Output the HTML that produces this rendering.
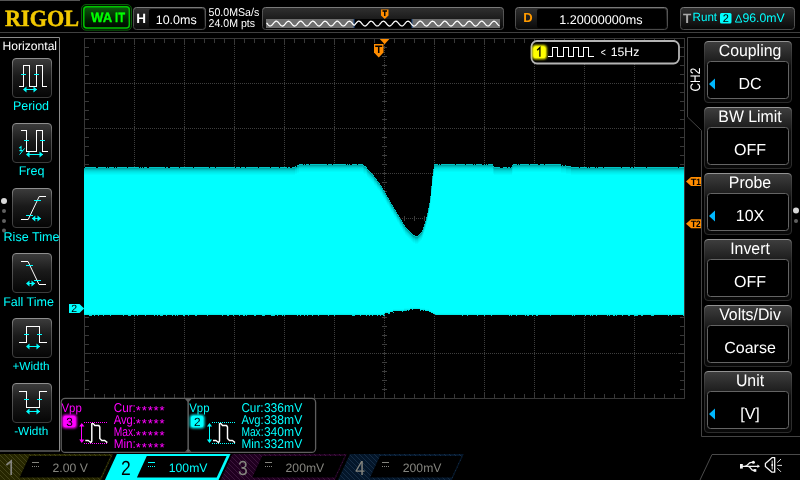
<!DOCTYPE html>
<html><head><meta charset="utf-8"><title>RIGOL</title><style>html,body{margin:0;padding:0;background:#000;overflow:hidden}body{width:800px;height:480px;font-family:"Liberation Sans",sans-serif}svg{display:block;position:absolute;left:0;top:0;will-change:transform}</style></head><body><svg width="800" height="480" viewBox="0 0 800 480" font-family="Liberation Sans, sans-serif" text-rendering="geometricPrecision"><defs>
<linearGradient id="gBtn" x1="0" y1="0" x2="0" y2="1"><stop offset="0" stop-color="#3c3c3c"/><stop offset="0.45" stop-color="#1a1a1a"/><stop offset="1" stop-color="#050505"/></linearGradient>
<linearGradient id="gMenu" x1="0" y1="0" x2="0" y2="1"><stop offset="0" stop-color="#3e3e3e"/><stop offset="0.32" stop-color="#1e1e1e"/><stop offset="0.4" stop-color="#0e0e0e"/><stop offset="1" stop-color="#080808"/></linearGradient>
<linearGradient id="gBtnS" x1="0" y1="0" x2="0" y2="1"><stop offset="0" stop-color="#8e8e8e"/><stop offset="0.25" stop-color="#5a5a5a"/><stop offset="1" stop-color="#3c3c3c"/></linearGradient>
<linearGradient id="gMenuS" x1="0" y1="0" x2="0" y2="1"><stop offset="0" stop-color="#929292"/><stop offset="0.06" stop-color="#4a4a4a"/><stop offset="0.3" stop-color="#303030"/><stop offset="1" stop-color="#2c2c2c"/></linearGradient>
<linearGradient id="gBoxS" x1="0" y1="0" x2="0" y2="1"><stop offset="0" stop-color="#7a7a7a"/><stop offset="0.2" stop-color="#565656"/><stop offset="1" stop-color="#4a4a4a"/></linearGradient>
<linearGradient id="gTop" x1="0" y1="0" x2="0" y2="1"><stop offset="0" stop-color="#303030"/><stop offset="1" stop-color="#080808"/></linearGradient>
<linearGradient id="gWait" x1="0" y1="0" x2="0" y2="1"><stop offset="0" stop-color="#0c5a0c"/><stop offset="0.6" stop-color="#022002"/><stop offset="1" stop-color="#000800"/></linearGradient>
<pattern id="h1" width="5" height="5" patternUnits="userSpaceOnUse"><rect width="5" height="5" fill="#262600"/><path d="M-1,-1 L6,6 M-1,4 L1,6 M4,-1 L6,1" stroke="#46461c" stroke-width="0.9"/></pattern>
<pattern id="h3" width="5" height="5" patternUnits="userSpaceOnUse"><rect width="5" height="5" fill="#200020"/><path d="M-1,-1 L6,6 M-1,4 L1,6 M4,-1 L6,1" stroke="#401840" stroke-width="0.9"/></pattern>
<pattern id="h4" width="5" height="5" patternUnits="userSpaceOnUse"><rect width="5" height="5" fill="#04162a"/><path d="M-1,-1 L6,6 M-1,4 L1,6 M4,-1 L6,1" stroke="#183048" stroke-width="0.9"/></pattern>
<filter id="glow" x="-30%" y="-30%" width="160%" height="160%"><feGaussianBlur stdDeviation="0.9"/></filter>
</defs>
<rect x="0" y="0" width="800" height="480" fill="#000"/>
<rect x="0" y="32" width="800" height="1" fill="#404040"/>
<rect x="0" y="0" width="80" height="1" fill="#555"/>
<text x="5" y="25.6" font-family="Liberation Serif, serif" font-weight="bold" font-size="23.2" fill="#f2c800" stroke="#f2c800" stroke-width="0.5" textLength="74" lengthAdjust="spacingAndGlyphs">RIGOL</text>
<rect x="81.5" y="4.5" width="50" height="25.7" rx="4.5" fill="#001400" stroke="#0a5c0a" stroke-width="1"/>
<rect x="83.8" y="6.8" width="45.5" height="21.3" rx="3" fill="url(#gWait)" stroke="#00c400" stroke-width="1.5"/>
<text x="91" y="21.8" font-family="Liberation Sans, sans-serif" font-weight="bold" font-size="13.5" fill="#00ff00" stroke="#00ff00" stroke-width="0.35" textLength="21.2" lengthAdjust="spacingAndGlyphs">WA</text>
<text x="115" y="21.8" font-family="Liberation Sans, sans-serif" font-weight="bold" font-size="13.5" fill="#00ff00" stroke="#00ff00" stroke-width="0.35" textLength="10" lengthAdjust="spacingAndGlyphs">IT</text>
<rect x="133.5" y="7.5" width="72" height="22" rx="3" fill="url(#gTop)" stroke="url(#gBoxS)"/>
<rect x="149" y="9" width="55" height="19" rx="2" fill="#000"/>
<text x="136.3" y="22.7" font-size="13.5" fill="#fff" text-anchor="start" font-weight="bold" >H</text>
<text x="155.7" y="23.6" font-size="12.5" fill="#fff" text-anchor="start" font-weight="normal" >10.0ms</text>
<text x="208.6" y="16" font-size="11.3" fill="#fff" text-anchor="start" font-weight="normal" textLength="50.6" lengthAdjust="spacingAndGlyphs">50.0MSa/s</text>
<text x="208.6" y="26.9" font-size="11.3" fill="#fff" text-anchor="start" font-weight="normal" textLength="46.4" lengthAdjust="spacingAndGlyphs">24.0M pts</text>
<rect x="262.5" y="7.5" width="241" height="22" rx="3" fill="url(#gTop)" stroke="url(#gBoxS)"/>
<rect x="266" y="19" width="234" height="9" fill="#6e6e6e"/>
<rect x="354" y="19" width="58" height="9" fill="#000"/>
<rect x="353.5" y="19" width="1" height="9" fill="#1a4a8a"/>
<rect x="411.5" y="19" width="1" height="9" fill="#1a4a8a"/>
<polyline points="266.5,22.80 267.0,23.41 267.5,24.02 268.0,24.61 268.5,25.13 269.0,25.55 269.5,25.84 270.0,25.99 270.5,25.97 271.0,25.80 271.5,25.48 272.0,25.04 272.5,24.51 273.0,23.91 273.5,23.29 274.0,22.70 274.5,22.16 275.0,21.72 275.5,21.40 276.0,21.23 276.5,21.21 277.0,21.35 277.5,21.64 278.0,22.06 278.5,22.58 279.0,23.17 279.5,23.79 280.0,24.39 280.5,24.94 281.0,25.41 281.5,25.75 282.0,25.95 282.5,26.00 283.0,25.88 283.5,25.62 284.0,25.22 284.5,24.72 285.0,24.14 285.5,23.53 286.0,22.92 286.5,22.36 287.0,21.87 287.5,21.51 288.0,21.28 288.5,21.20 289.0,21.28 289.5,21.52 290.0,21.89 290.5,22.38 291.0,22.94 291.5,23.55 292.0,24.17 292.5,24.74 293.0,25.24 293.5,25.63 294.0,25.89 294.5,26.00 295.0,25.95 295.5,25.74 296.0,25.39 296.5,24.92 297.0,24.37 297.5,23.76 298.0,23.15 298.5,22.56 299.0,22.04 299.5,21.63 300.0,21.35 300.5,21.21 301.0,21.23 301.5,21.41 302.0,21.73 302.5,22.18 303.0,22.72 303.5,23.32 304.0,23.94 304.5,24.53 305.0,25.06 305.5,25.50 306.0,25.81 306.5,25.98 307.0,25.98 307.5,25.83 308.0,25.54 308.5,25.11 309.0,24.59 309.5,24.00 310.0,23.38 310.5,22.78 311.0,22.23 311.5,21.77 312.0,21.44 312.5,21.24 313.0,21.21 313.5,21.33 314.0,21.60 314.5,22.00 315.0,22.51 315.5,23.09 316.0,23.70 316.5,24.31 317.0,24.87 317.5,25.35 318.0,25.71 318.5,25.93 319.0,26.00 319.5,25.91 320.0,25.67 320.5,25.29 321.0,24.80 321.5,24.23 322.0,23.62 322.5,23.00 323.0,22.43 323.5,21.93 324.0,21.55 324.5,21.30 325.0,21.20 325.5,21.26 326.0,21.48 326.5,21.83 327.0,22.30 327.5,22.86 328.0,23.47 328.5,24.08 329.0,24.67 329.5,25.18 330.0,25.59 330.5,25.86 331.0,25.99 331.5,25.96 332.0,25.78 332.5,25.45 333.0,24.99 333.5,24.45 334.0,23.85 334.5,23.23 335.0,22.64 335.5,22.11 336.0,21.68 336.5,21.38 337.0,21.22 337.5,21.22 338.0,21.38 338.5,21.68 339.0,22.11 339.5,22.64 340.0,23.23 340.5,23.85 341.0,24.45 341.5,24.99 342.0,25.45 342.5,25.78 343.0,25.96 343.5,25.99 344.0,25.86 344.5,25.59 345.0,25.18 345.5,24.67 346.0,24.08 346.5,23.47 347.0,22.86 347.5,22.30 348.0,21.83 348.5,21.48 349.0,21.26 349.5,21.20 350.0,21.30 350.5,21.55 351.0,21.93 351.5,22.43 352.0,23.00 352.5,23.62 353.0,24.23 353.5,24.80 354.0,25.29" fill="none" stroke="#fff" stroke-width="1.25"/>
<polyline points="354.0,25.47 354.5,25.03 355.0,24.50 355.5,23.90 356.0,23.29 356.5,22.70 357.0,22.17 357.5,21.73 358.0,21.41 358.5,21.23 359.0,21.21 359.5,21.34 360.0,21.62 360.5,22.03 361.0,22.54 361.5,23.12 362.0,23.73 362.5,24.33 363.0,24.89 363.5,25.36 364.0,25.71 364.5,25.93 365.0,26.00 365.5,25.91 366.0,25.67 366.5,25.30 367.0,24.81 367.5,24.25 368.0,23.65 368.5,23.04 369.0,22.47 369.5,21.97 370.0,21.58 370.5,21.32 371.0,21.20 371.5,21.25 372.0,21.44 372.5,21.78 373.0,22.24 373.5,22.78 374.0,23.38 374.5,23.99 375.0,24.57 375.5,25.10 376.0,25.52 376.5,25.82 377.0,25.98 377.5,25.98 378.0,25.83 378.5,25.53 379.0,25.11 379.5,24.59 380.0,24.00 380.5,23.39 381.0,22.79 381.5,22.25 382.0,21.79 382.5,21.45 383.0,21.25 383.5,21.20 384.0,21.31 384.5,21.57 385.0,21.96 385.5,22.46 386.0,23.03 386.5,23.63 387.0,24.24 387.5,24.80 388.0,25.29 388.5,25.67 389.0,25.91 389.5,26.00 390.0,25.94 390.5,25.72 391.0,25.37 391.5,24.90 392.0,24.35 392.5,23.74 393.0,23.13 393.5,22.55 394.0,22.04 394.5,21.63 395.0,21.35 395.5,21.21 396.0,21.23 396.5,21.40 397.0,21.72 397.5,22.16 398.0,22.69 398.5,23.28 399.0,23.89 399.5,24.48 400.0,25.02 400.5,25.46 401.0,25.78 401.5,25.96 402.0,25.99 402.5,25.86 403.0,25.59 403.5,25.18 404.0,24.67 404.5,24.10 405.0,23.49 405.5,22.88 406.0,22.33 406.5,21.85 407.0,21.49 407.5,21.27 408.0,21.20 408.5,21.28 409.0,21.52 409.5,21.89 410.0,22.37 410.5,22.93 411.0,23.54 411.5,24.14 412.0,24.72 412.5,25.22 413.0,25.61 413.5,25.88 414.0,26.00 414.5,25.96 415.0,25.76 415.5,25.43 416.0,24.98 416.5,24.44 417.0,23.84 417.5,23.23 418.0,22.64 418.5,22.12 419.0,21.69 419.5,21.38 420.0,21.22 420.5,21.22 421.0,21.37 421.5,21.66 422.0,22.08 422.5,22.60 423.0,23.18 423.5,23.79 424.0,24.39 424.5,24.94 425.0,25.40 425.5,25.74 426.0,25.95 426.5,26.00 427.0,25.89 427.5,25.64 428.0,25.25 428.5,24.76 429.0,24.19 429.5,23.58 430.0,22.98 430.5,22.41 431.0,21.92 431.5,21.54 432.0,21.30 432.5,21.20 433.0,21.26 433.5,21.47 434.0,21.82 434.5,22.29 435.0,22.84 435.5,23.44 436.0,24.05 436.5,24.63 437.0,25.14 437.5,25.56 438.0,25.85 438.5,25.99 439.0,25.97 439.5,25.80 440.0,25.49 440.5,25.06 441.0,24.53 441.5,23.94 442.0,23.33 442.5,22.73 443.0,22.20 443.5,21.75 444.0,21.42 444.5,21.24 445.0,21.21 445.5,21.33 446.0,21.60 446.5,22.00 447.0,22.51 447.5,23.09 448.0,23.70 448.5,24.30 449.0,24.86 449.5,25.33 450.0,25.70 450.5,25.92 451.0,26.00 451.5,25.92 452.0,25.69 452.5,25.32 453.0,24.85 453.5,24.29 454.0,23.68 454.5,23.07 455.0,22.50 455.5,22.00 456.0,21.60 456.5,21.33 457.0,21.21 457.5,21.24 458.0,21.43 458.5,21.76 459.0,22.21 459.5,22.74 460.0,23.34 460.5,23.95 461.0,24.54 461.5,25.07 462.0,25.50 462.5,25.81 463.0,25.97 463.5,25.99 464.0,25.84 464.5,25.55 465.0,25.14 465.5,24.62 466.0,24.04 466.5,23.43 467.0,22.83 467.5,22.28 468.0,21.81 468.5,21.47 469.0,21.26 469.5,21.20 470.0,21.30 470.5,21.55 471.0,21.93 471.5,22.42 472.0,22.99 472.5,23.60 473.0,24.20 473.5,24.77 474.0,25.26 474.5,25.65 475.0,25.90 475.5,26.00 476.0,25.94 476.5,25.74 477.0,25.39 477.5,24.93 478.0,24.38 478.5,23.78 479.0,23.17 479.5,22.59 480.0,22.07 480.5,21.65 481.0,21.36 481.5,21.22 482.0,21.22 482.5,21.39 483.0,21.70 483.5,22.13 484.0,22.65 484.5,23.24 485.0,23.85 485.5,24.45 486.0,24.99 486.5,25.44 487.0,25.77 487.5,25.96 488.0,25.99 488.5,25.87 489.0,25.61 489.5,25.21 490.0,24.71 490.5,24.13 491.0,23.52 491.5,22.92 492.0,22.36 492.5,21.88 493.0,21.51 493.5,21.28 494.0,21.20 494.5,21.27 495.0,21.50 495.5,21.86 496.0,22.34 496.5,22.90 497.0,23.50 497.5,24.11 498.0,24.68 498.5,25.19 499.0,25.59 499.5,25.87" fill="none" stroke="#fff" stroke-width="1.25"/>
<path d="M381,9.5 h7.5 v6 l-3.75,3.5 l-3.75,-3.5 z" fill="#ff8c00"/>
<path d="M382.5,11 h4.5 M384.75,11 v5" stroke="#000" stroke-width="1.4" fill="none"/>
<rect x="515.5" y="7.5" width="152" height="22" rx="3" fill="url(#gTop)" stroke="url(#gBoxS)"/>
<rect x="537" y="9" width="129" height="19" rx="2" fill="#000"/>
<text x="523.2" y="22.4" font-size="13" fill="#ff9a00" text-anchor="start" font-weight="bold" >D</text>
<text x="559.3" y="23.6" font-size="12.6" fill="#fff" text-anchor="start" font-weight="normal" >1.20000000ms</text>
<rect x="680.5" y="7.5" width="114" height="22" rx="3" fill="url(#gTop)" stroke="url(#gBoxS)"/>
<text x="683" y="22.5" font-size="13.5" fill="#a8a8a8" text-anchor="start" font-weight="bold" >T</text>
<text x="692.5" y="21.4" font-size="12" fill="#00ffff" text-anchor="start" font-weight="normal" textLength="24.6" lengthAdjust="spacingAndGlyphs">Runt</text>
<rect x="720" y="13" width="11.5" height="10.5" rx="1.5" fill="#00ffff"/>
<text x="725.8" y="22.3" font-size="11" fill="#000" text-anchor="middle" font-weight="normal" >2</text>
<path d="M735.4,22.1 L738.6,14.8 L741.8,22.1 Z" fill="none" stroke="#00ffff" stroke-width="1"/>
<text x="742.4" y="21.5" font-size="12.4" fill="#00ffff" text-anchor="start" font-weight="normal" textLength="42.4" lengthAdjust="spacingAndGlyphs">96.0mV</text>
<g shape-rendering="crispEdges"><line x1="134.5" y1="40" x2="134.5" y2="398" stroke="#3e3e3e" stroke-dasharray="1 1"/><line x1="184.5" y1="40" x2="184.5" y2="398" stroke="#3e3e3e" stroke-dasharray="1 1"/><line x1="234.5" y1="40" x2="234.5" y2="398" stroke="#3e3e3e" stroke-dasharray="1 1"/><line x1="284.5" y1="40" x2="284.5" y2="398" stroke="#3e3e3e" stroke-dasharray="1 1"/><line x1="334.5" y1="40" x2="334.5" y2="398" stroke="#3e3e3e" stroke-dasharray="1 1"/><line x1="384.5" y1="40" x2="384.5" y2="398" stroke="#3e3e3e" stroke-dasharray="1 1"/><line x1="434.5" y1="40" x2="434.5" y2="398" stroke="#3e3e3e" stroke-dasharray="1 1"/><line x1="484.5" y1="40" x2="484.5" y2="398" stroke="#3e3e3e" stroke-dasharray="1 1"/><line x1="534.5" y1="40" x2="534.5" y2="398" stroke="#3e3e3e" stroke-dasharray="1 1"/><line x1="584.5" y1="40" x2="584.5" y2="398" stroke="#3e3e3e" stroke-dasharray="1 1"/><line x1="634.5" y1="40" x2="634.5" y2="398" stroke="#3e3e3e" stroke-dasharray="1 1"/><line x1="86" y1="83.5" x2="684" y2="83.5" stroke="#3e3e3e" stroke-dasharray="1 1"/><rect x="134" y="82" width="1" height="3" fill="#3e3e3e"/><rect x="184" y="82" width="1" height="3" fill="#3e3e3e"/><rect x="234" y="82" width="1" height="3" fill="#3e3e3e"/><rect x="284" y="82" width="1" height="3" fill="#3e3e3e"/><rect x="334" y="82" width="1" height="3" fill="#3e3e3e"/><rect x="384" y="82" width="1" height="3" fill="#3e3e3e"/><rect x="434" y="82" width="1" height="3" fill="#3e3e3e"/><rect x="484" y="82" width="1" height="3" fill="#3e3e3e"/><rect x="534" y="82" width="1" height="3" fill="#3e3e3e"/><rect x="584" y="82" width="1" height="3" fill="#3e3e3e"/><rect x="634" y="82" width="1" height="3" fill="#3e3e3e"/><line x1="86" y1="128.5" x2="684" y2="128.5" stroke="#3e3e3e" stroke-dasharray="1 1"/><rect x="134" y="127" width="1" height="3" fill="#3e3e3e"/><rect x="184" y="127" width="1" height="3" fill="#3e3e3e"/><rect x="234" y="127" width="1" height="3" fill="#3e3e3e"/><rect x="284" y="127" width="1" height="3" fill="#3e3e3e"/><rect x="334" y="127" width="1" height="3" fill="#3e3e3e"/><rect x="384" y="127" width="1" height="3" fill="#3e3e3e"/><rect x="434" y="127" width="1" height="3" fill="#3e3e3e"/><rect x="484" y="127" width="1" height="3" fill="#3e3e3e"/><rect x="534" y="127" width="1" height="3" fill="#3e3e3e"/><rect x="584" y="127" width="1" height="3" fill="#3e3e3e"/><rect x="634" y="127" width="1" height="3" fill="#3e3e3e"/><line x1="86" y1="173.5" x2="684" y2="173.5" stroke="#3e3e3e" stroke-dasharray="1 1"/><rect x="134" y="172" width="1" height="3" fill="#3e3e3e"/><rect x="184" y="172" width="1" height="3" fill="#3e3e3e"/><rect x="234" y="172" width="1" height="3" fill="#3e3e3e"/><rect x="284" y="172" width="1" height="3" fill="#3e3e3e"/><rect x="334" y="172" width="1" height="3" fill="#3e3e3e"/><rect x="384" y="172" width="1" height="3" fill="#3e3e3e"/><rect x="434" y="172" width="1" height="3" fill="#3e3e3e"/><rect x="484" y="172" width="1" height="3" fill="#3e3e3e"/><rect x="534" y="172" width="1" height="3" fill="#3e3e3e"/><rect x="584" y="172" width="1" height="3" fill="#3e3e3e"/><rect x="634" y="172" width="1" height="3" fill="#3e3e3e"/><line x1="86" y1="218.5" x2="684" y2="218.5" stroke="#3e3e3e" stroke-dasharray="1 1"/><rect x="134" y="217" width="1" height="3" fill="#3e3e3e"/><rect x="184" y="217" width="1" height="3" fill="#3e3e3e"/><rect x="234" y="217" width="1" height="3" fill="#3e3e3e"/><rect x="284" y="217" width="1" height="3" fill="#3e3e3e"/><rect x="334" y="217" width="1" height="3" fill="#3e3e3e"/><rect x="384" y="217" width="1" height="3" fill="#3e3e3e"/><rect x="434" y="217" width="1" height="3" fill="#3e3e3e"/><rect x="484" y="217" width="1" height="3" fill="#3e3e3e"/><rect x="534" y="217" width="1" height="3" fill="#3e3e3e"/><rect x="584" y="217" width="1" height="3" fill="#3e3e3e"/><rect x="634" y="217" width="1" height="3" fill="#3e3e3e"/><line x1="86" y1="263.5" x2="684" y2="263.5" stroke="#3e3e3e" stroke-dasharray="1 1"/><rect x="134" y="262" width="1" height="3" fill="#3e3e3e"/><rect x="184" y="262" width="1" height="3" fill="#3e3e3e"/><rect x="234" y="262" width="1" height="3" fill="#3e3e3e"/><rect x="284" y="262" width="1" height="3" fill="#3e3e3e"/><rect x="334" y="262" width="1" height="3" fill="#3e3e3e"/><rect x="384" y="262" width="1" height="3" fill="#3e3e3e"/><rect x="434" y="262" width="1" height="3" fill="#3e3e3e"/><rect x="484" y="262" width="1" height="3" fill="#3e3e3e"/><rect x="534" y="262" width="1" height="3" fill="#3e3e3e"/><rect x="584" y="262" width="1" height="3" fill="#3e3e3e"/><rect x="634" y="262" width="1" height="3" fill="#3e3e3e"/><line x1="86" y1="308.5" x2="684" y2="308.5" stroke="#3e3e3e" stroke-dasharray="1 1"/><rect x="134" y="307" width="1" height="3" fill="#3e3e3e"/><rect x="184" y="307" width="1" height="3" fill="#3e3e3e"/><rect x="234" y="307" width="1" height="3" fill="#3e3e3e"/><rect x="284" y="307" width="1" height="3" fill="#3e3e3e"/><rect x="334" y="307" width="1" height="3" fill="#3e3e3e"/><rect x="384" y="307" width="1" height="3" fill="#3e3e3e"/><rect x="434" y="307" width="1" height="3" fill="#3e3e3e"/><rect x="484" y="307" width="1" height="3" fill="#3e3e3e"/><rect x="534" y="307" width="1" height="3" fill="#3e3e3e"/><rect x="584" y="307" width="1" height="3" fill="#3e3e3e"/><rect x="634" y="307" width="1" height="3" fill="#3e3e3e"/><line x1="86" y1="353.5" x2="684" y2="353.5" stroke="#3e3e3e" stroke-dasharray="1 1"/><rect x="134" y="352" width="1" height="3" fill="#3e3e3e"/><rect x="184" y="352" width="1" height="3" fill="#3e3e3e"/><rect x="234" y="352" width="1" height="3" fill="#3e3e3e"/><rect x="284" y="352" width="1" height="3" fill="#3e3e3e"/><rect x="334" y="352" width="1" height="3" fill="#3e3e3e"/><rect x="384" y="352" width="1" height="3" fill="#3e3e3e"/><rect x="434" y="352" width="1" height="3" fill="#3e3e3e"/><rect x="484" y="352" width="1" height="3" fill="#3e3e3e"/><rect x="534" y="352" width="1" height="3" fill="#3e3e3e"/><rect x="584" y="352" width="1" height="3" fill="#3e3e3e"/><rect x="634" y="352" width="1" height="3" fill="#3e3e3e"/><rect x="94" y="39" width="1" height="4" fill="#383838"/><rect x="94" y="394" width="1" height="4" fill="#383838"/><rect x="94" y="216" width="1" height="5" fill="#3e3e3e"/><rect x="104" y="39" width="1" height="4" fill="#383838"/><rect x="104" y="394" width="1" height="4" fill="#383838"/><rect x="104" y="216" width="1" height="5" fill="#3e3e3e"/><rect x="114" y="39" width="1" height="4" fill="#383838"/><rect x="114" y="394" width="1" height="4" fill="#383838"/><rect x="114" y="216" width="1" height="5" fill="#3e3e3e"/><rect x="124" y="39" width="1" height="4" fill="#383838"/><rect x="124" y="394" width="1" height="4" fill="#383838"/><rect x="124" y="216" width="1" height="5" fill="#3e3e3e"/><rect x="134" y="39" width="1" height="6" fill="#383838"/><rect x="134" y="392" width="1" height="6" fill="#383838"/><rect x="134" y="216" width="1" height="5" fill="#3e3e3e"/><rect x="144" y="39" width="1" height="4" fill="#383838"/><rect x="144" y="394" width="1" height="4" fill="#383838"/><rect x="144" y="216" width="1" height="5" fill="#3e3e3e"/><rect x="154" y="39" width="1" height="4" fill="#383838"/><rect x="154" y="394" width="1" height="4" fill="#383838"/><rect x="154" y="216" width="1" height="5" fill="#3e3e3e"/><rect x="164" y="39" width="1" height="4" fill="#383838"/><rect x="164" y="394" width="1" height="4" fill="#383838"/><rect x="164" y="216" width="1" height="5" fill="#3e3e3e"/><rect x="174" y="39" width="1" height="4" fill="#383838"/><rect x="174" y="394" width="1" height="4" fill="#383838"/><rect x="174" y="216" width="1" height="5" fill="#3e3e3e"/><rect x="184" y="39" width="1" height="6" fill="#383838"/><rect x="184" y="392" width="1" height="6" fill="#383838"/><rect x="184" y="216" width="1" height="5" fill="#3e3e3e"/><rect x="194" y="39" width="1" height="4" fill="#383838"/><rect x="194" y="394" width="1" height="4" fill="#383838"/><rect x="194" y="216" width="1" height="5" fill="#3e3e3e"/><rect x="204" y="39" width="1" height="4" fill="#383838"/><rect x="204" y="394" width="1" height="4" fill="#383838"/><rect x="204" y="216" width="1" height="5" fill="#3e3e3e"/><rect x="214" y="39" width="1" height="4" fill="#383838"/><rect x="214" y="394" width="1" height="4" fill="#383838"/><rect x="214" y="216" width="1" height="5" fill="#3e3e3e"/><rect x="224" y="39" width="1" height="4" fill="#383838"/><rect x="224" y="394" width="1" height="4" fill="#383838"/><rect x="224" y="216" width="1" height="5" fill="#3e3e3e"/><rect x="234" y="39" width="1" height="6" fill="#383838"/><rect x="234" y="392" width="1" height="6" fill="#383838"/><rect x="234" y="216" width="1" height="5" fill="#3e3e3e"/><rect x="244" y="39" width="1" height="4" fill="#383838"/><rect x="244" y="394" width="1" height="4" fill="#383838"/><rect x="244" y="216" width="1" height="5" fill="#3e3e3e"/><rect x="254" y="39" width="1" height="4" fill="#383838"/><rect x="254" y="394" width="1" height="4" fill="#383838"/><rect x="254" y="216" width="1" height="5" fill="#3e3e3e"/><rect x="264" y="39" width="1" height="4" fill="#383838"/><rect x="264" y="394" width="1" height="4" fill="#383838"/><rect x="264" y="216" width="1" height="5" fill="#3e3e3e"/><rect x="274" y="39" width="1" height="4" fill="#383838"/><rect x="274" y="394" width="1" height="4" fill="#383838"/><rect x="274" y="216" width="1" height="5" fill="#3e3e3e"/><rect x="284" y="39" width="1" height="6" fill="#383838"/><rect x="284" y="392" width="1" height="6" fill="#383838"/><rect x="284" y="216" width="1" height="5" fill="#3e3e3e"/><rect x="294" y="39" width="1" height="4" fill="#383838"/><rect x="294" y="394" width="1" height="4" fill="#383838"/><rect x="294" y="216" width="1" height="5" fill="#3e3e3e"/><rect x="304" y="39" width="1" height="4" fill="#383838"/><rect x="304" y="394" width="1" height="4" fill="#383838"/><rect x="304" y="216" width="1" height="5" fill="#3e3e3e"/><rect x="314" y="39" width="1" height="4" fill="#383838"/><rect x="314" y="394" width="1" height="4" fill="#383838"/><rect x="314" y="216" width="1" height="5" fill="#3e3e3e"/><rect x="324" y="39" width="1" height="4" fill="#383838"/><rect x="324" y="394" width="1" height="4" fill="#383838"/><rect x="324" y="216" width="1" height="5" fill="#3e3e3e"/><rect x="334" y="39" width="1" height="6" fill="#383838"/><rect x="334" y="392" width="1" height="6" fill="#383838"/><rect x="334" y="216" width="1" height="5" fill="#3e3e3e"/><rect x="344" y="39" width="1" height="4" fill="#383838"/><rect x="344" y="394" width="1" height="4" fill="#383838"/><rect x="344" y="216" width="1" height="5" fill="#3e3e3e"/><rect x="354" y="39" width="1" height="4" fill="#383838"/><rect x="354" y="394" width="1" height="4" fill="#383838"/><rect x="354" y="216" width="1" height="5" fill="#3e3e3e"/><rect x="364" y="39" width="1" height="4" fill="#383838"/><rect x="364" y="394" width="1" height="4" fill="#383838"/><rect x="364" y="216" width="1" height="5" fill="#3e3e3e"/><rect x="374" y="39" width="1" height="4" fill="#383838"/><rect x="374" y="394" width="1" height="4" fill="#383838"/><rect x="374" y="216" width="1" height="5" fill="#3e3e3e"/><rect x="384" y="39" width="1" height="6" fill="#383838"/><rect x="384" y="392" width="1" height="6" fill="#383838"/><rect x="384" y="216" width="1" height="5" fill="#3e3e3e"/><rect x="394" y="39" width="1" height="4" fill="#383838"/><rect x="394" y="394" width="1" height="4" fill="#383838"/><rect x="394" y="216" width="1" height="5" fill="#3e3e3e"/><rect x="404" y="39" width="1" height="4" fill="#383838"/><rect x="404" y="394" width="1" height="4" fill="#383838"/><rect x="404" y="216" width="1" height="5" fill="#3e3e3e"/><rect x="414" y="39" width="1" height="4" fill="#383838"/><rect x="414" y="394" width="1" height="4" fill="#383838"/><rect x="414" y="216" width="1" height="5" fill="#3e3e3e"/><rect x="424" y="39" width="1" height="4" fill="#383838"/><rect x="424" y="394" width="1" height="4" fill="#383838"/><rect x="424" y="216" width="1" height="5" fill="#3e3e3e"/><rect x="434" y="39" width="1" height="6" fill="#383838"/><rect x="434" y="392" width="1" height="6" fill="#383838"/><rect x="434" y="216" width="1" height="5" fill="#3e3e3e"/><rect x="444" y="39" width="1" height="4" fill="#383838"/><rect x="444" y="394" width="1" height="4" fill="#383838"/><rect x="444" y="216" width="1" height="5" fill="#3e3e3e"/><rect x="454" y="39" width="1" height="4" fill="#383838"/><rect x="454" y="394" width="1" height="4" fill="#383838"/><rect x="454" y="216" width="1" height="5" fill="#3e3e3e"/><rect x="464" y="39" width="1" height="4" fill="#383838"/><rect x="464" y="394" width="1" height="4" fill="#383838"/><rect x="464" y="216" width="1" height="5" fill="#3e3e3e"/><rect x="474" y="39" width="1" height="4" fill="#383838"/><rect x="474" y="394" width="1" height="4" fill="#383838"/><rect x="474" y="216" width="1" height="5" fill="#3e3e3e"/><rect x="484" y="39" width="1" height="6" fill="#383838"/><rect x="484" y="392" width="1" height="6" fill="#383838"/><rect x="484" y="216" width="1" height="5" fill="#3e3e3e"/><rect x="494" y="39" width="1" height="4" fill="#383838"/><rect x="494" y="394" width="1" height="4" fill="#383838"/><rect x="494" y="216" width="1" height="5" fill="#3e3e3e"/><rect x="504" y="39" width="1" height="4" fill="#383838"/><rect x="504" y="394" width="1" height="4" fill="#383838"/><rect x="504" y="216" width="1" height="5" fill="#3e3e3e"/><rect x="514" y="39" width="1" height="4" fill="#383838"/><rect x="514" y="394" width="1" height="4" fill="#383838"/><rect x="514" y="216" width="1" height="5" fill="#3e3e3e"/><rect x="524" y="39" width="1" height="4" fill="#383838"/><rect x="524" y="394" width="1" height="4" fill="#383838"/><rect x="524" y="216" width="1" height="5" fill="#3e3e3e"/><rect x="534" y="39" width="1" height="6" fill="#383838"/><rect x="534" y="392" width="1" height="6" fill="#383838"/><rect x="534" y="216" width="1" height="5" fill="#3e3e3e"/><rect x="544" y="39" width="1" height="4" fill="#383838"/><rect x="544" y="394" width="1" height="4" fill="#383838"/><rect x="544" y="216" width="1" height="5" fill="#3e3e3e"/><rect x="554" y="39" width="1" height="4" fill="#383838"/><rect x="554" y="394" width="1" height="4" fill="#383838"/><rect x="554" y="216" width="1" height="5" fill="#3e3e3e"/><rect x="564" y="39" width="1" height="4" fill="#383838"/><rect x="564" y="394" width="1" height="4" fill="#383838"/><rect x="564" y="216" width="1" height="5" fill="#3e3e3e"/><rect x="574" y="39" width="1" height="4" fill="#383838"/><rect x="574" y="394" width="1" height="4" fill="#383838"/><rect x="574" y="216" width="1" height="5" fill="#3e3e3e"/><rect x="584" y="39" width="1" height="6" fill="#383838"/><rect x="584" y="392" width="1" height="6" fill="#383838"/><rect x="584" y="216" width="1" height="5" fill="#3e3e3e"/><rect x="594" y="39" width="1" height="4" fill="#383838"/><rect x="594" y="394" width="1" height="4" fill="#383838"/><rect x="594" y="216" width="1" height="5" fill="#3e3e3e"/><rect x="604" y="39" width="1" height="4" fill="#383838"/><rect x="604" y="394" width="1" height="4" fill="#383838"/><rect x="604" y="216" width="1" height="5" fill="#3e3e3e"/><rect x="614" y="39" width="1" height="4" fill="#383838"/><rect x="614" y="394" width="1" height="4" fill="#383838"/><rect x="614" y="216" width="1" height="5" fill="#3e3e3e"/><rect x="624" y="39" width="1" height="4" fill="#383838"/><rect x="624" y="394" width="1" height="4" fill="#383838"/><rect x="624" y="216" width="1" height="5" fill="#3e3e3e"/><rect x="634" y="39" width="1" height="6" fill="#383838"/><rect x="634" y="392" width="1" height="6" fill="#383838"/><rect x="634" y="216" width="1" height="5" fill="#3e3e3e"/><rect x="644" y="39" width="1" height="4" fill="#383838"/><rect x="644" y="394" width="1" height="4" fill="#383838"/><rect x="644" y="216" width="1" height="5" fill="#3e3e3e"/><rect x="654" y="39" width="1" height="4" fill="#383838"/><rect x="654" y="394" width="1" height="4" fill="#383838"/><rect x="654" y="216" width="1" height="5" fill="#3e3e3e"/><rect x="664" y="39" width="1" height="4" fill="#383838"/><rect x="664" y="394" width="1" height="4" fill="#383838"/><rect x="664" y="216" width="1" height="5" fill="#3e3e3e"/><rect x="674" y="39" width="1" height="4" fill="#383838"/><rect x="674" y="394" width="1" height="4" fill="#383838"/><rect x="674" y="216" width="1" height="5" fill="#3e3e3e"/><rect x="85" y="47" width="4" height="1" fill="#383838"/><rect x="680" y="47" width="4" height="1" fill="#383838"/><rect x="382" y="47" width="5" height="1" fill="#3e3e3e"/><rect x="85" y="56" width="4" height="1" fill="#383838"/><rect x="680" y="56" width="4" height="1" fill="#383838"/><rect x="382" y="56" width="5" height="1" fill="#3e3e3e"/><rect x="85" y="65" width="4" height="1" fill="#383838"/><rect x="680" y="65" width="4" height="1" fill="#383838"/><rect x="382" y="65" width="5" height="1" fill="#3e3e3e"/><rect x="85" y="74" width="4" height="1" fill="#383838"/><rect x="680" y="74" width="4" height="1" fill="#383838"/><rect x="382" y="74" width="5" height="1" fill="#3e3e3e"/><rect x="85" y="83" width="6" height="1" fill="#383838"/><rect x="678" y="83" width="6" height="1" fill="#383838"/><rect x="382" y="83" width="5" height="1" fill="#3e3e3e"/><rect x="85" y="92" width="4" height="1" fill="#383838"/><rect x="680" y="92" width="4" height="1" fill="#383838"/><rect x="382" y="92" width="5" height="1" fill="#3e3e3e"/><rect x="85" y="101" width="4" height="1" fill="#383838"/><rect x="680" y="101" width="4" height="1" fill="#383838"/><rect x="382" y="101" width="5" height="1" fill="#3e3e3e"/><rect x="85" y="110" width="4" height="1" fill="#383838"/><rect x="680" y="110" width="4" height="1" fill="#383838"/><rect x="382" y="110" width="5" height="1" fill="#3e3e3e"/><rect x="85" y="119" width="4" height="1" fill="#383838"/><rect x="680" y="119" width="4" height="1" fill="#383838"/><rect x="382" y="119" width="5" height="1" fill="#3e3e3e"/><rect x="85" y="128" width="6" height="1" fill="#383838"/><rect x="678" y="128" width="6" height="1" fill="#383838"/><rect x="382" y="128" width="5" height="1" fill="#3e3e3e"/><rect x="85" y="137" width="4" height="1" fill="#383838"/><rect x="680" y="137" width="4" height="1" fill="#383838"/><rect x="382" y="137" width="5" height="1" fill="#3e3e3e"/><rect x="85" y="146" width="4" height="1" fill="#383838"/><rect x="680" y="146" width="4" height="1" fill="#383838"/><rect x="382" y="146" width="5" height="1" fill="#3e3e3e"/><rect x="85" y="155" width="4" height="1" fill="#383838"/><rect x="680" y="155" width="4" height="1" fill="#383838"/><rect x="382" y="155" width="5" height="1" fill="#3e3e3e"/><rect x="85" y="164" width="4" height="1" fill="#383838"/><rect x="680" y="164" width="4" height="1" fill="#383838"/><rect x="382" y="164" width="5" height="1" fill="#3e3e3e"/><rect x="85" y="173" width="6" height="1" fill="#383838"/><rect x="678" y="173" width="6" height="1" fill="#383838"/><rect x="382" y="173" width="5" height="1" fill="#3e3e3e"/><rect x="85" y="182" width="4" height="1" fill="#383838"/><rect x="680" y="182" width="4" height="1" fill="#383838"/><rect x="382" y="182" width="5" height="1" fill="#3e3e3e"/><rect x="85" y="191" width="4" height="1" fill="#383838"/><rect x="680" y="191" width="4" height="1" fill="#383838"/><rect x="382" y="191" width="5" height="1" fill="#3e3e3e"/><rect x="85" y="200" width="4" height="1" fill="#383838"/><rect x="680" y="200" width="4" height="1" fill="#383838"/><rect x="382" y="200" width="5" height="1" fill="#3e3e3e"/><rect x="85" y="209" width="4" height="1" fill="#383838"/><rect x="680" y="209" width="4" height="1" fill="#383838"/><rect x="382" y="209" width="5" height="1" fill="#3e3e3e"/><rect x="85" y="218" width="6" height="1" fill="#383838"/><rect x="678" y="218" width="6" height="1" fill="#383838"/><rect x="382" y="218" width="5" height="1" fill="#3e3e3e"/><rect x="85" y="227" width="4" height="1" fill="#383838"/><rect x="680" y="227" width="4" height="1" fill="#383838"/><rect x="382" y="227" width="5" height="1" fill="#3e3e3e"/><rect x="85" y="236" width="4" height="1" fill="#383838"/><rect x="680" y="236" width="4" height="1" fill="#383838"/><rect x="382" y="236" width="5" height="1" fill="#3e3e3e"/><rect x="85" y="245" width="4" height="1" fill="#383838"/><rect x="680" y="245" width="4" height="1" fill="#383838"/><rect x="382" y="245" width="5" height="1" fill="#3e3e3e"/><rect x="85" y="254" width="4" height="1" fill="#383838"/><rect x="680" y="254" width="4" height="1" fill="#383838"/><rect x="382" y="254" width="5" height="1" fill="#3e3e3e"/><rect x="85" y="263" width="6" height="1" fill="#383838"/><rect x="678" y="263" width="6" height="1" fill="#383838"/><rect x="382" y="263" width="5" height="1" fill="#3e3e3e"/><rect x="85" y="272" width="4" height="1" fill="#383838"/><rect x="680" y="272" width="4" height="1" fill="#383838"/><rect x="382" y="272" width="5" height="1" fill="#3e3e3e"/><rect x="85" y="281" width="4" height="1" fill="#383838"/><rect x="680" y="281" width="4" height="1" fill="#383838"/><rect x="382" y="281" width="5" height="1" fill="#3e3e3e"/><rect x="85" y="290" width="4" height="1" fill="#383838"/><rect x="680" y="290" width="4" height="1" fill="#383838"/><rect x="382" y="290" width="5" height="1" fill="#3e3e3e"/><rect x="85" y="299" width="4" height="1" fill="#383838"/><rect x="680" y="299" width="4" height="1" fill="#383838"/><rect x="382" y="299" width="5" height="1" fill="#3e3e3e"/><rect x="85" y="308" width="6" height="1" fill="#383838"/><rect x="678" y="308" width="6" height="1" fill="#383838"/><rect x="382" y="308" width="5" height="1" fill="#3e3e3e"/><rect x="85" y="317" width="4" height="1" fill="#383838"/><rect x="680" y="317" width="4" height="1" fill="#383838"/><rect x="382" y="317" width="5" height="1" fill="#3e3e3e"/><rect x="85" y="326" width="4" height="1" fill="#383838"/><rect x="680" y="326" width="4" height="1" fill="#383838"/><rect x="382" y="326" width="5" height="1" fill="#3e3e3e"/><rect x="85" y="335" width="4" height="1" fill="#383838"/><rect x="680" y="335" width="4" height="1" fill="#383838"/><rect x="382" y="335" width="5" height="1" fill="#3e3e3e"/><rect x="85" y="344" width="4" height="1" fill="#383838"/><rect x="680" y="344" width="4" height="1" fill="#383838"/><rect x="382" y="344" width="5" height="1" fill="#3e3e3e"/><rect x="85" y="353" width="6" height="1" fill="#383838"/><rect x="678" y="353" width="6" height="1" fill="#383838"/><rect x="382" y="353" width="5" height="1" fill="#3e3e3e"/><rect x="85" y="362" width="4" height="1" fill="#383838"/><rect x="680" y="362" width="4" height="1" fill="#383838"/><rect x="382" y="362" width="5" height="1" fill="#3e3e3e"/><rect x="85" y="371" width="4" height="1" fill="#383838"/><rect x="680" y="371" width="4" height="1" fill="#383838"/><rect x="382" y="371" width="5" height="1" fill="#3e3e3e"/><rect x="85" y="380" width="4" height="1" fill="#383838"/><rect x="680" y="380" width="4" height="1" fill="#383838"/><rect x="382" y="380" width="5" height="1" fill="#3e3e3e"/><rect x="85" y="389" width="4" height="1" fill="#383838"/><rect x="680" y="389" width="4" height="1" fill="#383838"/><rect x="382" y="389" width="5" height="1" fill="#3e3e3e"/><rect x="84.5" y="38.5" width="600" height="360" fill="none" stroke="#383838"/></g>
<polygon points="84,167 294,167 296,166 298,165 300,164 362,164 365,166 367,168 370,171.5 374,176 378,181.5 380,184 384,190.5 390,201 395,209.5 400,218 405,226 409,231 412,234 415,235.5 417,236 419,235 421,232.5 423,228.5 425.5,221 427.5,213 429.5,203 431,192 432,181 433,172 434.5,164 493,164 494,167 512,167 513,164 558,164 563,165 568,166 573,167 684,167 684,315 436,315 432,313 428,311 420,309.5 413,309 404,310.5 400,311 393,311.5 388,313 385,313.5 384,315 84,315" fill="#00c4c4" shape-rendering="crispEdges"/>
<polygon points="84,168 294,168 296,167 298,166 300,165 362,165 365,167 367,169 370,172.5 374,177 378,182.5 380,185 384,191.5 390,202 395,210.5 400,219 405,227 409,232 412,235 415,236.5 417,237 419,236 421,233.5 423,229.5 425.5,222 427.5,214 429.5,204 431,193 432,182 433,173 434.5,165 493,165 494,168 512,168 513,165 558,165 563,166 568,167 573,168 684,168 684,315 436,315 432,313 428,311 420,309.5 413,309 404,310.5 400,311 393,311.5 388,313 385,313.5 384,315 84,315" fill="#00a6a6" shape-rendering="crispEdges"/>
<polygon points="84,169 294,169 296,168 298,167 300,166 362,166 365,168 367,170 370,173.5 374,178 378,183.5 380,186 384,192.5 390,203 395,211.5 400,220 405,228 409,233 412,236 415,237.5 417,238 419,237 421,234.5 423,230.5 425.5,223 427.5,215 429.5,205 431,194 432,183 433,174 434.5,166 493,166 494,169 512,169 513,166 558,166 563,167 568,168 573,169 684,169 684,315 436,315 432,313 428,311 420,309.5 413,309 404,310.5 400,311 393,311.5 388,313 385,313.5 384,315 84,315" fill="#00bebe" shape-rendering="crispEdges"/>
<polygon points="84,170 294,170 296,169 298,168 300,167 362,167 365,169 367,171 370,174.5 374,179 378,184.5 380,187 384,193.5 390,204 395,212.5 400,221 405,229 409,234 412,237 415,238.5 417,239 419,238 421,235.5 423,231.5 425.5,224 427.5,216 429.5,206 431,195 432,184 433,175 434.5,167 493,167 494,170 512,170 513,167 558,167 563,168 568,169 573,170 684,170 684,315 436,315 432,313 428,311 420,309.5 413,309 404,310.5 400,311 393,311.5 388,313 385,313.5 384,315 84,315" fill="#00d2d2" shape-rendering="crispEdges"/>
<polygon points="84,171 294,171 296,170 298,169 300,168 362,168 365,170 367,172 370,175.5 374,180 378,185.5 380,188 384,194.5 390,205 395,213.5 400,222 405,230 409,235 412,238 415,239.5 417,240 419,239 421,236.5 423,232.5 425.5,225 427.5,217 429.5,207 431,196 432,185 433,176 434.5,168 493,168 494,171 512,171 513,168 558,168 563,169 568,170 573,171 684,171 684,315 436,315 432,313 428,311 420,309.5 413,309 404,310.5 400,311 393,311.5 388,313 385,313.5 384,315 84,315" fill="#00e0e0" shape-rendering="crispEdges"/>
<polygon points="84,172 294,172 296,171 298,170 300,169 362,169 365,171 367,173 370,176.5 374,181 378,186.5 380,189 384,195.5 390,206 395,214.5 400,223 405,231 409,236 412,239 415,240.5 417,241 419,240 421,237.5 423,233.5 425.5,226 427.5,218 429.5,208 431,197 432,186 433,177 434.5,169 493,169 494,172 512,172 513,169 558,169 563,170 568,171 573,172 684,172 684,315 436,315 432,313 428,311 420,309.5 413,309 404,310.5 400,311 393,311.5 388,313 385,313.5 384,315 84,315" fill="#00eaea" shape-rendering="crispEdges"/>
<polygon points="84,173 294,173 296,172 298,171 300,170 362,170 365,172 367,174 370,177.5 374,182 378,187.5 380,190 384,196.5 390,207 395,215.5 400,224 405,232 409,237 412,240 415,241.5 417,242 419,241 421,238.5 423,234.5 425.5,227 427.5,219 429.5,209 431,198 432,187 433,178 434.5,170 493,170 494,173 512,173 513,170 558,170 563,171 568,172 573,173 684,173 684,314 436,314 432,312 428,310 420,308.5 413,308 404,309.5 400,310 393,310.5 388,312 385,312.5 384,314 84,314" fill="#00f2f2" shape-rendering="crispEdges"/>
<polygon points="84,174 294,174 296,173 298,172 300,171 362,171 365,173 367,175 370,178.5 374,183 378,188.5 380,191 384,197.5 390,208 395,216.5 400,225 405,233 409,238 412,241 415,242.5 417,243 419,242 421,239.5 423,235.5 425.5,228 427.5,220 429.5,210 431,199 432,188 433,179 434.5,171 493,171 494,174 512,174 513,171 558,171 563,172 568,173 573,174 684,174 684,314 436,314 432,312 428,310 420,308.5 413,308 404,309.5 400,310 393,310.5 388,312 385,312.5 384,314 84,314" fill="#00f9f9" shape-rendering="crispEdges"/>
<polygon points="84,175 294,175 296,174 298,173 300,172 362,172 365,174 367,176 370,179.5 374,184 378,189.5 380,192 384,198.5 390,209 395,217.5 400,226 405,234 409,239 412,242 415,243.5 417,244 419,243 421,240.5 423,236.5 425.5,229 427.5,221 429.5,211 431,200 432,189 433,180 434.5,172 493,172 494,175 512,175 513,172 558,172 563,173 568,174 573,175 684,175 684,313 436,313 432,311 428,309 420,307.5 413,307 404,308.5 400,309 393,309.5 388,311 385,311.5 384,313 84,313" fill="#00ffff" shape-rendering="crispEdges"/>
<g shape-rendering="crispEdges"><rect x="84" y="167" width="1" height="1" fill="#000"/><rect x="89" y="315" width="1" height="1" fill="#00d0d0"/><rect x="90" y="315" width="1" height="1" fill="#00d0d0"/><rect x="91" y="315" width="1" height="1" fill="#00d0d0"/><rect x="94" y="315" width="1" height="1" fill="#00d0d0"/><rect x="96" y="167" width="1" height="1" fill="#000"/><rect x="97" y="167" width="1" height="1" fill="#000"/><rect x="98" y="315" width="1" height="1" fill="#00d0d0"/><rect x="103" y="315" width="1" height="1" fill="#00d0d0"/><rect x="106" y="167" width="1" height="1" fill="#000"/><rect x="108" y="167" width="1" height="1" fill="#000"/><rect x="110" y="315" width="1" height="1" fill="#00d0d0"/><rect x="114" y="167" width="1" height="1" fill="#000"/><rect x="116" y="167" width="1" height="1" fill="#000"/><rect x="123" y="315" width="1" height="1" fill="#00d0d0"/><rect x="127" y="167" width="1" height="1" fill="#000"/><rect x="128" y="315" width="1" height="1" fill="#00d0d0"/><rect x="129" y="315" width="1" height="1" fill="#00d0d0"/><rect x="130" y="315" width="1" height="1" fill="#00d0d0"/><rect x="134" y="315" width="1" height="1" fill="#00d0d0"/><rect x="137" y="315" width="1" height="1" fill="#00d0d0"/><rect x="139" y="167" width="1" height="1" fill="#000"/><rect x="141" y="167" width="1" height="1" fill="#000"/><rect x="143" y="167" width="1" height="1" fill="#000"/><rect x="145" y="315" width="1" height="1" fill="#00d0d0"/><rect x="147" y="167" width="1" height="1" fill="#000"/><rect x="148" y="167" width="1" height="1" fill="#000"/><rect x="154" y="315" width="1" height="1" fill="#00d0d0"/><rect x="157" y="315" width="1" height="1" fill="#00d0d0"/><rect x="160" y="315" width="1" height="1" fill="#00d0d0"/><rect x="161" y="315" width="1" height="1" fill="#00d0d0"/><rect x="162" y="315" width="1" height="1" fill="#00d0d0"/><rect x="165" y="167" width="1" height="1" fill="#000"/><rect x="166" y="315" width="1" height="1" fill="#00d0d0"/><rect x="168" y="167" width="1" height="1" fill="#000"/><rect x="169" y="167" width="1" height="1" fill="#000"/><rect x="172" y="315" width="1" height="1" fill="#00d0d0"/><rect x="175" y="315" width="1" height="1" fill="#00d0d0"/><rect x="177" y="315" width="1" height="1" fill="#00d0d0"/><rect x="179" y="167" width="1" height="1" fill="#000"/><rect x="183" y="315" width="1" height="1" fill="#00d0d0"/><rect x="184" y="315" width="1" height="1" fill="#00d0d0"/><rect x="188" y="315" width="1" height="1" fill="#00d0d0"/><rect x="193" y="167" width="1" height="1" fill="#000"/><rect x="195" y="315" width="1" height="1" fill="#00d0d0"/><rect x="196" y="315" width="1" height="1" fill="#00d0d0"/><rect x="207" y="315" width="1" height="1" fill="#00d0d0"/><rect x="209" y="167" width="1" height="1" fill="#000"/><rect x="215" y="167" width="1" height="1" fill="#000"/><rect x="222" y="315" width="1" height="1" fill="#00d0d0"/><rect x="227" y="315" width="1" height="1" fill="#00d0d0"/><rect x="228" y="315" width="1" height="1" fill="#00d0d0"/><rect x="233" y="315" width="1" height="1" fill="#00d0d0"/><rect x="235" y="167" width="1" height="1" fill="#000"/><rect x="239" y="315" width="1" height="1" fill="#00d0d0"/><rect x="240" y="167" width="1" height="1" fill="#000"/><rect x="243" y="315" width="1" height="1" fill="#00d0d0"/><rect x="244" y="315" width="1" height="1" fill="#00d0d0"/><rect x="245" y="167" width="1" height="1" fill="#000"/><rect x="246" y="315" width="1" height="1" fill="#00d0d0"/><rect x="254" y="315" width="1" height="1" fill="#00d0d0"/><rect x="255" y="315" width="1" height="1" fill="#00d0d0"/><rect x="258" y="167" width="1" height="1" fill="#000"/><rect x="262" y="315" width="1" height="1" fill="#00d0d0"/><rect x="263" y="315" width="1" height="1" fill="#00d0d0"/><rect x="264" y="315" width="1" height="1" fill="#00d0d0"/><rect x="270" y="167" width="1" height="1" fill="#000"/><rect x="271" y="315" width="1" height="1" fill="#00d0d0"/><rect x="272" y="315" width="1" height="1" fill="#00d0d0"/><rect x="273" y="315" width="1" height="1" fill="#00d0d0"/><rect x="274" y="315" width="1" height="1" fill="#00d0d0"/><rect x="277" y="315" width="1" height="1" fill="#00d0d0"/><rect x="279" y="167" width="1" height="1" fill="#000"/><rect x="282" y="315" width="1" height="1" fill="#00d0d0"/><rect x="284" y="315" width="1" height="1" fill="#00d0d0"/><rect x="287" y="167" width="1" height="1" fill="#000"/><rect x="290" y="167" width="1" height="1" fill="#000"/><rect x="291" y="167" width="1" height="1" fill="#000"/><rect x="296" y="166" width="1" height="1" fill="#000"/><rect x="297" y="315" width="1" height="1" fill="#00d0d0"/><rect x="300" y="315" width="1" height="1" fill="#00d0d0"/><rect x="303" y="164" width="1" height="1" fill="#000"/><rect x="304" y="315" width="1" height="1" fill="#00d0d0"/><rect x="305" y="164" width="1" height="1" fill="#000"/><rect x="307" y="315" width="1" height="1" fill="#00d0d0"/><rect x="309" y="164" width="1" height="1" fill="#000"/><rect x="312" y="315" width="1" height="1" fill="#00d0d0"/><rect x="318" y="315" width="1" height="1" fill="#00d0d0"/><rect x="327" y="164" width="1" height="1" fill="#000"/><rect x="328" y="315" width="1" height="1" fill="#00d0d0"/><rect x="332" y="164" width="1" height="1" fill="#000"/><rect x="334" y="315" width="1" height="1" fill="#00d0d0"/><rect x="346" y="164" width="1" height="1" fill="#000"/><rect x="348" y="164" width="1" height="1" fill="#000"/><rect x="350" y="164" width="1" height="1" fill="#000"/><rect x="351" y="164" width="1" height="1" fill="#000"/><rect x="352" y="315" width="1" height="1" fill="#00d0d0"/><rect x="353" y="315" width="1" height="1" fill="#00d0d0"/><rect x="354" y="315" width="1" height="1" fill="#00d0d0"/><rect x="357" y="164" width="1" height="1" fill="#000"/><rect x="360" y="315" width="1" height="1" fill="#00d0d0"/><rect x="366" y="315" width="1" height="1" fill="#00d0d0"/><rect x="369" y="315" width="1" height="1" fill="#00d0d0"/><rect x="372" y="315" width="1" height="1" fill="#00d0d0"/><rect x="377" y="315" width="1" height="1" fill="#00d0d0"/><rect x="380" y="315" width="1" height="1" fill="#00d0d0"/><rect x="383" y="315" width="1" height="1" fill="#00d0d0"/><rect x="384" y="315" width="1" height="1" fill="#00d0d0"/><rect x="388" y="313" width="1" height="1" fill="#00d0d0"/><rect x="389" y="313" width="1" height="1" fill="#00d0d0"/><rect x="393" y="312" width="1" height="1" fill="#00d0d0"/><rect x="402" y="311" width="1" height="1" fill="#00d0d0"/><rect x="404" y="310" width="1" height="1" fill="#00d0d0"/><rect x="405" y="310" width="1" height="1" fill="#00d0d0"/><rect x="406" y="310" width="1" height="1" fill="#00d0d0"/><rect x="408" y="310" width="1" height="1" fill="#00d0d0"/><rect x="412" y="309" width="1" height="1" fill="#00d0d0"/><rect x="420" y="310" width="1" height="1" fill="#00d0d0"/><rect x="423" y="310" width="1" height="1" fill="#00d0d0"/><rect x="435" y="314" width="1" height="1" fill="#00d0d0"/><rect x="438" y="164" width="1" height="1" fill="#000"/><rect x="440" y="164" width="1" height="1" fill="#000"/><rect x="455" y="164" width="1" height="1" fill="#000"/><rect x="462" y="315" width="1" height="1" fill="#00d0d0"/><rect x="465" y="164" width="1" height="1" fill="#000"/><rect x="467" y="315" width="1" height="1" fill="#00d0d0"/><rect x="473" y="164" width="1" height="1" fill="#000"/><rect x="475" y="164" width="1" height="1" fill="#000"/><rect x="477" y="315" width="1" height="1" fill="#00d0d0"/><rect x="482" y="164" width="1" height="1" fill="#000"/><rect x="483" y="164" width="1" height="1" fill="#000"/><rect x="484" y="315" width="1" height="1" fill="#00d0d0"/><rect x="485" y="164" width="1" height="1" fill="#000"/><rect x="487" y="164" width="1" height="1" fill="#000"/><rect x="491" y="315" width="1" height="1" fill="#00d0d0"/><rect x="493" y="164" width="1" height="1" fill="#000"/><rect x="500" y="167" width="1" height="1" fill="#000"/><rect x="501" y="167" width="1" height="1" fill="#000"/><rect x="502" y="167" width="1" height="1" fill="#000"/><rect x="507" y="167" width="1" height="1" fill="#000"/><rect x="509" y="315" width="1" height="1" fill="#00d0d0"/><rect x="510" y="167" width="1" height="1" fill="#000"/><rect x="511" y="315" width="1" height="1" fill="#00d0d0"/><rect x="516" y="315" width="1" height="1" fill="#00d0d0"/><rect x="517" y="164" width="1" height="1" fill="#000"/><rect x="519" y="164" width="1" height="1" fill="#000"/><rect x="525" y="315" width="1" height="1" fill="#00d0d0"/><rect x="527" y="315" width="1" height="1" fill="#00d0d0"/><rect x="528" y="315" width="1" height="1" fill="#00d0d0"/><rect x="529" y="164" width="1" height="1" fill="#000"/><rect x="532" y="315" width="1" height="1" fill="#00d0d0"/><rect x="536" y="315" width="1" height="1" fill="#00d0d0"/><rect x="537" y="315" width="1" height="1" fill="#00d0d0"/><rect x="538" y="164" width="1" height="1" fill="#000"/><rect x="539" y="164" width="1" height="1" fill="#000"/><rect x="544" y="164" width="1" height="1" fill="#000"/><rect x="550" y="315" width="1" height="1" fill="#00d0d0"/><rect x="561" y="165" width="1" height="1" fill="#000"/><rect x="563" y="165" width="1" height="1" fill="#000"/><rect x="564" y="165" width="1" height="1" fill="#000"/><rect x="572" y="315" width="1" height="1" fill="#00d0d0"/><rect x="574" y="315" width="1" height="1" fill="#00d0d0"/><rect x="579" y="167" width="1" height="1" fill="#000"/><rect x="585" y="315" width="1" height="1" fill="#00d0d0"/><rect x="587" y="167" width="1" height="1" fill="#000"/><rect x="589" y="167" width="1" height="1" fill="#000"/><rect x="590" y="315" width="1" height="1" fill="#00d0d0"/><rect x="592" y="315" width="1" height="1" fill="#00d0d0"/><rect x="595" y="167" width="1" height="1" fill="#000"/><rect x="596" y="315" width="1" height="1" fill="#00d0d0"/><rect x="597" y="167" width="1" height="1" fill="#000"/><rect x="603" y="167" width="1" height="1" fill="#000"/><rect x="607" y="315" width="1" height="1" fill="#00d0d0"/><rect x="609" y="315" width="1" height="1" fill="#00d0d0"/><rect x="613" y="315" width="1" height="1" fill="#00d0d0"/><rect x="614" y="315" width="1" height="1" fill="#00d0d0"/><rect x="616" y="315" width="1" height="1" fill="#00d0d0"/><rect x="621" y="167" width="1" height="1" fill="#000"/><rect x="622" y="315" width="1" height="1" fill="#00d0d0"/><rect x="628" y="315" width="1" height="1" fill="#00d0d0"/><rect x="629" y="315" width="1" height="1" fill="#00d0d0"/><rect x="630" y="167" width="1" height="1" fill="#000"/><rect x="633" y="167" width="1" height="1" fill="#000"/><rect x="634" y="315" width="1" height="1" fill="#00d0d0"/><rect x="635" y="315" width="1" height="1" fill="#00d0d0"/><rect x="636" y="315" width="1" height="1" fill="#00d0d0"/><rect x="637" y="315" width="1" height="1" fill="#00d0d0"/><rect x="641" y="315" width="1" height="1" fill="#00d0d0"/><rect x="642" y="315" width="1" height="1" fill="#00d0d0"/><rect x="646" y="167" width="1" height="1" fill="#000"/><rect x="651" y="315" width="1" height="1" fill="#00d0d0"/><rect x="652" y="315" width="1" height="1" fill="#00d0d0"/><rect x="653" y="315" width="1" height="1" fill="#00d0d0"/><rect x="668" y="315" width="1" height="1" fill="#00d0d0"/><rect x="671" y="315" width="1" height="1" fill="#00d0d0"/><rect x="678" y="167" width="1" height="1" fill="#000"/><rect x="683" y="315" width="1" height="1" fill="#00d0d0"/></g>
<path d="M379.8,39 h9.6 l-4.8,5.2 z" fill="#ff8c00"/>
<path d="M374,44 h9.5 v8.5 l-4.75,5 l-4.75,-5 z" fill="#ff8c00"/>
<path d="M375.2,46.2 h7 M378.7,46.2 v6.8" stroke="#000" stroke-width="1.5" fill="none"/>
<path d="M686,181.5 l5,-4.5 h10 v9 h-10 z" fill="#ff8c00"/>
<text x="690.8" y="184.9" font-family="Liberation Sans, sans-serif" font-weight="bold" font-size="9.2" fill="#000">T</text>
<text x="696.3" y="184.9" font-family="Liberation Sans, sans-serif" font-weight="bold" font-size="9.2" fill="#000" textLength="4.6" lengthAdjust="spacingAndGlyphs">1</text>
<path d="M686,223.7 l5,-4.5 h10 v9 h-10 z" fill="#ff8c00"/>
<text x="690.8" y="227.1" font-family="Liberation Sans, sans-serif" font-weight="bold" font-size="9.2" fill="#000">T</text>
<text x="696.0" y="227.1" font-family="Liberation Sans, sans-serif" font-weight="bold" font-size="9.2" fill="#000" textLength="4.6" lengthAdjust="spacingAndGlyphs">2</text>
<path d="M69,304 h10.5 l4.7,4.5 l-4.7,4.5 h-10.5 z" fill="#00ffff"/>
<text x="74.2" y="312.2" font-size="10.5" fill="#000" text-anchor="middle" font-weight="normal" >2</text>
<rect x="531.5" y="41" width="147.5" height="22.5" rx="5.5" fill="#000" stroke="#b4b4b4" stroke-width="1.8"/>
<rect x="532.2" y="44.9" width="14.6" height="14.3" rx="3.5" fill="#ffff00" filter="url(#glow)"/>
<rect x="533.5" y="46.5" width="12" height="11.5" rx="2.5" fill="#ffff00"/>
<path d="M537.2,50.2 L539.9,47.6 V56.8" fill="none" stroke="#000" stroke-width="1.3"/>
<path d="M548,56.5 H552.5 V47.5 H557.5 V56.5 H563.5 V47.5 H568.5 V56.5 H573.5 V47.5 H578.5 V56.5 H583.5 V47.5 H588.5 V56.5 H594" fill="none" stroke="#fff" stroke-width="1" shape-rendering="crispEdges"/>
<text x="600.8" y="55.6" font-size="11" fill="#fff" text-anchor="start" font-weight="normal" textLength="5" lengthAdjust="spacingAndGlyphs">&lt;</text>
<text x="610.8" y="56" font-size="12.2" fill="#fff" text-anchor="start" font-weight="normal" >15Hz</text>
<path d="M0,37.5 H59.5 V451" fill="none" stroke="#8c8c8c"/>
<rect x="0" y="450.5" width="60" height="1" fill="#8c8c8c"/>
<text x="2.6" y="49.8" font-size="12.1" fill="#fff" text-anchor="start" font-weight="normal" >Horizontal</text>
<rect x="12.5" y="58.5" width="39" height="39" rx="3.5" fill="url(#gBtn)" stroke="url(#gBtnS)"/>
<text x="31.0" y="110.3" font-size="12.5" fill="#00ffff" text-anchor="middle" font-weight="normal" >Period</text>
<rect x="12.5" y="123.5" width="39" height="39" rx="3.5" fill="url(#gBtn)" stroke="url(#gBtnS)"/>
<text x="31.5" y="175.3" font-size="12.5" fill="#00ffff" text-anchor="middle" font-weight="normal" >Freq</text>
<rect x="12.5" y="188.5" width="39" height="39" rx="3.5" fill="url(#gBtn)" stroke="url(#gBtnS)"/>
<text x="31.5" y="241.2" font-size="12.6" fill="#00ffff" text-anchor="middle" font-weight="normal" >Rise Time</text>
<rect x="12.5" y="253.5" width="39" height="39" rx="3.5" fill="url(#gBtn)" stroke="url(#gBtnS)"/>
<text x="28.5" y="306.1" font-size="12.5" fill="#00ffff" text-anchor="middle" font-weight="normal" >Fall Time</text>
<rect x="12.5" y="318.5" width="39" height="39" rx="3.5" fill="url(#gBtn)" stroke="url(#gBtnS)"/>
<text x="31.0" y="370.3" font-size="11.8" fill="#00ffff" text-anchor="middle" font-weight="normal" >+Width</text>
<rect x="12.5" y="383.5" width="39" height="39" rx="3.5" fill="url(#gBtn)" stroke="url(#gBtnS)"/>
<text x="31.2" y="435.3" font-size="11.8" fill="#00ffff" text-anchor="middle" font-weight="normal" >-Width</text>
<g fill="none" stroke-width="1" shape-rendering="crispEdges"><path d="M19,86.5 H23.5 V65.5 H29.5 V86.5 H36.5 V65.5 H42.5 V86.5 H47" stroke="#fff"/><path d="M21,74.5 H26 M34,74.5 H39" stroke="#00ffff"/><path d="M23.5,89.5 H36.5" stroke="#00ffff"/><path d="M23.0,89.5 l3.5,-3 v6 z M37.0,89.5 l-3.5,-3 v6 z" fill="#00ffff" stroke="none" shape-rendering="auto"/></g>
<g fill="none" stroke-width="1" shape-rendering="crispEdges"><path d="M21,130.5 H26.5 V151.5 H36.5 V130.5 H42.5 V151.5 H48" stroke="#fff"/><path d="M24,140.5 H29 M40,140.5 H45" stroke="#00ffff"/><path d="M26.5,154.5 H42.5" stroke="#00ffff"/><path d="M26.0,154.5 l3.5,-3 v6 z M43.0,154.5 l-3.5,-3 v6 z" fill="#00ffff" stroke="none" shape-rendering="auto"/><path d="M19.6,154.6 L24.6,148.4" stroke="#00ffff" shape-rendering="auto"/><path d="M19.2,148.2 L21,146.6 V150.5 M19.4,150.6 H22.6" stroke="#00ffff" stroke-width="1.1" shape-rendering="auto"/></g>
<g fill="none" stroke-width="1" shape-rendering="crispEdges"><path d="M21,219.5 H28.2 L39.2,196.5 H46" stroke="#fff" shape-rendering="auto"/><path d="M34,200.5 H41 M26,215.5 H33" stroke="#00ffff"/><path d="M32.3,218.5 H40.5" stroke="#00ffff"/><path d="M31.799999999999997,218.5 l3.5,-3 v6 z M41.0,218.5 l-3.5,-3 v6 z" fill="#00ffff" stroke="none" shape-rendering="auto"/></g>
<g fill="none" stroke-width="1" shape-rendering="crispEdges"><path d="M21,261.5 H28 L39,284.5 H46" stroke="#fff" shape-rendering="auto"/><path d="M26,265.5 H33 M34,280.5 H41" stroke="#00ffff"/><path d="M26.5,283.5 H34.5" stroke="#00ffff"/><path d="M26.0,283.5 l3.5,-3 v6 z M35.0,283.5 l-3.5,-3 v6 z" fill="#00ffff" stroke="none" shape-rendering="auto"/></g>
<g fill="none" stroke-width="1" shape-rendering="crispEdges"><path d="M19,342.5 H26.5 V326.5 H39.5 V342.5 H47" stroke="#fff"/><path d="M24,334.5 H29 M37,334.5 H42" stroke="#00ffff"/><path d="M26.5,346.5 H39.5" stroke="#00ffff"/><path d="M26.0,346.5 l3.5,-3 v6 z M40.0,346.5 l-3.5,-3 v6 z" fill="#00ffff" stroke="none" shape-rendering="auto"/></g>
<g fill="none" stroke-width="1" shape-rendering="crispEdges"><path d="M19,391.5 H26.5 V407.5 H39.5 V391.5 H47" stroke="#fff"/><path d="M24,399.5 H29 M37,399.5 H42" stroke="#00ffff"/><path d="M26.5,411.5 H39.5" stroke="#00ffff"/><path d="M26.0,411.5 l3.5,-3 v6 z M40.0,411.5 l-3.5,-3 v6 z" fill="#00ffff" stroke="none" shape-rendering="auto"/></g>
<circle cx="4" cy="201" r="3" fill="#d8d8d8"/>
<circle cx="4" cy="211" r="2" fill="#606060"/>
<circle cx="4" cy="221" r="2" fill="#606060"/>
<circle cx="4" cy="230.5" r="2" fill="#606060"/>
<circle cx="796" cy="210.5" r="3" fill="#d8d8d8"/>
<circle cx="796" cy="221" r="2" fill="#606060"/>
<path d="M687.5,37.5 V117 L701.5,130.5 V436.5 H800 M687.5,37.5 H800" fill="none" stroke="#444"/>
<text transform="translate(700.2,91.4) rotate(-90)" font-family="Liberation Sans, sans-serif" font-size="13.8" fill="#fff" textLength="23.6" lengthAdjust="spacingAndGlyphs">CH2</text>
<rect x="704.5" y="41.5" width="87" height="61" rx="3.5" fill="url(#gMenu)" stroke="url(#gMenuS)"/>
<rect x="707.5" y="61.5" width="81" height="37" rx="3" fill="#000" stroke="#646464"/>
<text transform="translate(750,56) scale(0.955,1)" font-family="Liberation Sans, sans-serif" font-size="16.6" fill="#fff" text-anchor="middle">Coupling</text>
<text x="750" y="88.8" font-size="16" fill="#fff" text-anchor="middle" font-weight="normal" >DC</text>
<path d="M709,84 l6,-5.5 v11 z" fill="#00b8ff"/>
<rect x="704.5" y="107.5" width="87" height="61" rx="3.5" fill="url(#gMenu)" stroke="url(#gMenuS)"/>
<rect x="707.5" y="127.5" width="81" height="37" rx="3" fill="#000" stroke="#646464"/>
<text transform="translate(750,122) scale(0.955,1)" font-family="Liberation Sans, sans-serif" font-size="16.6" fill="#fff" text-anchor="middle">BW Limit</text>
<text x="750" y="154.8" font-size="16" fill="#fff" text-anchor="middle" font-weight="normal" >OFF</text>
<rect x="704.5" y="173.5" width="87" height="61" rx="3.5" fill="url(#gMenu)" stroke="url(#gMenuS)"/>
<rect x="707.5" y="193.5" width="81" height="37" rx="3" fill="#000" stroke="#646464"/>
<text transform="translate(750,188) scale(0.955,1)" font-family="Liberation Sans, sans-serif" font-size="16.6" fill="#fff" text-anchor="middle">Probe</text>
<text x="750" y="220.8" font-size="16" fill="#fff" text-anchor="middle" font-weight="normal" >10X</text>
<path d="M709,216 l6,-5.5 v11 z" fill="#00b8ff"/>
<rect x="704.5" y="239.5" width="87" height="61" rx="3.5" fill="url(#gMenu)" stroke="url(#gMenuS)"/>
<rect x="707.5" y="259.5" width="81" height="37" rx="3" fill="#000" stroke="#646464"/>
<text transform="translate(750,254) scale(0.955,1)" font-family="Liberation Sans, sans-serif" font-size="16.6" fill="#fff" text-anchor="middle">Invert</text>
<text x="750" y="286.8" font-size="16" fill="#fff" text-anchor="middle" font-weight="normal" >OFF</text>
<rect x="704.5" y="305.5" width="87" height="61" rx="3.5" fill="url(#gMenu)" stroke="url(#gMenuS)"/>
<rect x="707.5" y="325.5" width="81" height="37" rx="3" fill="#000" stroke="#646464"/>
<text transform="translate(750,320) scale(0.955,1)" font-family="Liberation Sans, sans-serif" font-size="16.6" fill="#fff" text-anchor="middle">Volts/Div</text>
<text x="750" y="352.8" font-size="16" fill="#fff" text-anchor="middle" font-weight="normal" >Coarse</text>
<rect x="704.5" y="371.5" width="87" height="61" rx="3.5" fill="url(#gMenu)" stroke="url(#gMenuS)"/>
<rect x="707.5" y="391.5" width="81" height="37" rx="3" fill="#000" stroke="#646464"/>
<text transform="translate(750,386) scale(0.955,1)" font-family="Liberation Sans, sans-serif" font-size="16.6" fill="#fff" text-anchor="middle">Unit</text>
<text x="750" y="418.8" font-size="16" fill="#fff" text-anchor="middle" font-weight="normal" >[V]</text>
<path d="M709,414 l6,-5.5 v11 z" fill="#00b8ff"/>
<rect x="61.2" y="398.4" width="254.4" height="54" rx="4" fill="#000" stroke="#5e5e5e" stroke-width="1.3"/>
<rect x="187.4" y="399" width="1.5" height="53" fill="#5e5e5e"/>
<path d="M185,399 h6.4 l-3.2,3.4 z" fill="#5e5e5e"/><path d="M185,451.8 h6.4 l-3.2,-3.4 z" fill="#5e5e5e"/>
<text x="61.5" y="411.7" font-size="12.2" fill="#ff00ff" text-anchor="start" font-weight="normal" textLength="20.3" lengthAdjust="spacingAndGlyphs">Vpp</text>
<rect x="62.0" y="414.4" width="15" height="14.2" rx="3.5" fill="#ff00ff" filter="url(#glow)" opacity="0.9"/>
<rect x="63.3" y="415.8" width="12.3" height="11.5" rx="2.5" fill="#ff00ff"/>
<text x="69.6" y="426.1" font-size="11.8" fill="#000" text-anchor="middle" font-weight="normal" >3</text>
<path d="M81.8,425 V441" stroke="#ff00ff" stroke-width="1" shape-rendering="crispEdges"/>
<path d="M81.8,423 l-2.6,3.4 h5.2 z M81.8,443 l-2.6,-3.4 h5.2 z" fill="#ff00ff"/>
<path d="M84.3,422.5 H107.3 M84.3,443.5 H107.3" stroke="#ff00ff" stroke-dasharray="1 1" shape-rendering="crispEdges"/>
<path d="M85.3,440.5 H88.3 L90.8,442.5 L91.8,441 V423.6 L93.3,423.6 L94.8,425.5 H98.8 L99.8,427 V438.5 L101.8,440.5 H104.8 L107.3,442.6" fill="none" stroke="#fff" stroke-width="1.45" stroke-linejoin="round"/>
<text x="113.69999999999999" y="411.8" font-size="12.8" fill="#ff00ff" text-anchor="start" font-weight="normal" textLength="22.2" lengthAdjust="spacingAndGlyphs">Cur:</text>
<text x="135.7" y="415.40000000000003" font-family="Liberation Sans, sans-serif" font-size="13.2" fill="#ff00ff" textLength="29" lengthAdjust="spacing">*****</text>
<text x="113.69999999999999" y="423.90000000000003" font-size="12.8" fill="#ff00ff" text-anchor="start" font-weight="normal" textLength="22.2" lengthAdjust="spacingAndGlyphs">Avg:</text>
<text x="135.7" y="427.50000000000006" font-family="Liberation Sans, sans-serif" font-size="13.2" fill="#ff00ff" textLength="29" lengthAdjust="spacing">*****</text>
<text x="113.69999999999999" y="436.0" font-size="12.8" fill="#ff00ff" text-anchor="start" font-weight="normal" textLength="22.2" lengthAdjust="spacingAndGlyphs">Max:</text>
<text x="135.7" y="439.6" font-family="Liberation Sans, sans-serif" font-size="13.2" fill="#ff00ff" textLength="29" lengthAdjust="spacing">*****</text>
<text x="113.69999999999999" y="448.1" font-size="12.8" fill="#ff00ff" text-anchor="start" font-weight="normal" textLength="22.2" lengthAdjust="spacingAndGlyphs">Min:</text>
<text x="135.7" y="451.70000000000005" font-family="Liberation Sans, sans-serif" font-size="13.2" fill="#ff00ff" textLength="29" lengthAdjust="spacing">*****</text>
<text x="189.2" y="411.7" font-size="12.2" fill="#00ffff" text-anchor="start" font-weight="normal" textLength="20.3" lengthAdjust="spacingAndGlyphs">Vpp</text>
<rect x="189.7" y="414.4" width="15" height="14.2" rx="3.5" fill="#00ffff" filter="url(#glow)" opacity="0.9"/>
<rect x="191.0" y="415.8" width="12.3" height="11.5" rx="2.5" fill="#00ffff"/>
<text x="197.3" y="426.1" font-size="11.8" fill="#000" text-anchor="middle" font-weight="normal" >2</text>
<path d="M209.5,425 V441" stroke="#00ffff" stroke-width="1" shape-rendering="crispEdges"/>
<path d="M209.5,423 l-2.6,3.4 h5.2 z M209.5,443 l-2.6,-3.4 h5.2 z" fill="#00ffff"/>
<path d="M212,422.5 H235 M212,443.5 H235" stroke="#00ffff" stroke-dasharray="1 1" shape-rendering="crispEdges"/>
<path d="M213,440.5 H216 L218.5,442.5 L219.5,441 V423.6 L221,423.6 L222.5,425.5 H226.5 L227.5,427 V438.5 L229.5,440.5 H232.5 L235,442.6" fill="none" stroke="#fff" stroke-width="1.45" stroke-linejoin="round"/>
<text x="241.4" y="411.8" font-size="12.8" fill="#00ffff" text-anchor="start" font-weight="normal" textLength="22.2" lengthAdjust="spacingAndGlyphs">Cur:</text>
<text x="263.9" y="411.8" font-size="12.8" fill="#00ffff" text-anchor="start" font-weight="normal" textLength="38.3" lengthAdjust="spacingAndGlyphs">336mV</text>
<text x="241.4" y="423.90000000000003" font-size="12.8" fill="#00ffff" text-anchor="start" font-weight="normal" textLength="22.2" lengthAdjust="spacingAndGlyphs">Avg:</text>
<text x="263.9" y="423.90000000000003" font-size="12.8" fill="#00ffff" text-anchor="start" font-weight="normal" textLength="38.3" lengthAdjust="spacingAndGlyphs">338mV</text>
<text x="241.4" y="436.0" font-size="12.8" fill="#00ffff" text-anchor="start" font-weight="normal" textLength="22.2" lengthAdjust="spacingAndGlyphs">Max:</text>
<text x="263.9" y="436.0" font-size="12.8" fill="#00ffff" text-anchor="start" font-weight="normal" textLength="38.3" lengthAdjust="spacingAndGlyphs">340mV</text>
<text x="241.4" y="448.1" font-size="12.8" fill="#00ffff" text-anchor="start" font-weight="normal" textLength="22.2" lengthAdjust="spacingAndGlyphs">Min:</text>
<text x="263.9" y="448.1" font-size="12.8" fill="#00ffff" text-anchor="start" font-weight="normal" textLength="38.3" lengthAdjust="spacingAndGlyphs">332mV</text>
<polygon points="-2,454 113,454 101.03999999999999,480 -13.96,480" fill="url(#h1)"/>
<polygon points="29.5,456.0 110.5,456.0 100.61,477.5 19.61,477.5" fill="#000"/>
<path d="M6.3999999999999995,465 L11.2,461 V475" fill="none" stroke="#84847e" stroke-width="1.7" stroke-linejoin="miter"/>
<path d="M32,462.5 h7" stroke="#84847e" shape-rendering="crispEdges"/>
<path d="M32,466.5 h7" stroke="#84847e" stroke-dasharray="1 1" shape-rendering="crispEdges"/>
<text x="52.6" y="472" font-size="12.2" fill="#84847e" text-anchor="start" font-weight="normal" >2.00 V</text>
<polygon points="116.9,454 230.5,454 218.54,480 104.94,480" fill="#00ffff"/>
<polygon points="146.8,456.0 226.6,456.0 216.70999999999998,477.5 136.91000000000003,477.5" fill="#000"/>
<text transform="translate(125.8,474.7) scale(0.86,1)" x="0" y="0" font-family="Liberation Sans, sans-serif" font-size="20.4" fill="#000" text-anchor="middle">2</text>
<path d="M148,462.5 h7" stroke="#00ffff" shape-rendering="crispEdges"/>
<path d="M148,466.5 h7" stroke="#00ffff" stroke-dasharray="1 1" shape-rendering="crispEdges"/>
<text x="168.8" y="472" font-size="12.2" fill="#00ffff" text-anchor="start" font-weight="normal" >100mV</text>
<polygon points="232.6,454 346.8,454 334.84000000000003,480 220.64,480" fill="url(#h3)"/>
<polygon points="262.2,456.0 344.6,456.0 334.71000000000004,477.5 252.31,477.5" fill="#000"/>
<text transform="translate(243,474.7) scale(0.86,1)" x="0" y="0" font-family="Liberation Sans, sans-serif" font-size="20.4" fill="#84847e" text-anchor="middle">3</text>
<path d="M265,462.5 h7" stroke="#84847e" shape-rendering="crispEdges"/>
<path d="M265,466.5 h7" stroke="#84847e" stroke-dasharray="1 1" shape-rendering="crispEdges"/>
<text x="285.6" y="472" font-size="12.2" fill="#84847e" text-anchor="start" font-weight="normal" >200mV</text>
<polygon points="350,454 463.8,454 451.84000000000003,480 338.04,480" fill="url(#h4)"/>
<polygon points="380,456.0 461.6,456.0 451.71000000000004,477.5 370.11,477.5" fill="#000"/>
<text transform="translate(360.2,474.7) scale(0.86,1)" x="0" y="0" font-family="Liberation Sans, sans-serif" font-size="20.4" fill="#84847e" text-anchor="middle">4</text>
<path d="M382,462.5 h7" stroke="#84847e" shape-rendering="crispEdges"/>
<path d="M382,466.5 h7" stroke="#84847e" stroke-dasharray="1 1" shape-rendering="crispEdges"/>
<text x="402.8" y="472" font-size="12.2" fill="#84847e" text-anchor="start" font-weight="normal" >200mV</text>
<path d="M700,480 L712,454.5 H800" fill="none" stroke="#4a4a4a"/>
<g fill="none" stroke="#f4f4f4" stroke-width="1.25" stroke-linecap="round"><path d="M742,466.3 H758"/><path d="M744.8,466.3 C748.5,466.3 747.5,462.3 751.5,462.3 H753"/><path d="M748,466.3 C750.8,466.3 750.6,470.4 753.2,470.4 H754.5"/></g>
<rect x="740" y="464" width="2.8" height="4.6" fill="#f4f4f4"/>
<circle cx="753.4" cy="462.3" r="1.5" fill="#f4f4f4"/>
<rect x="753.6" y="469.1" width="2.7" height="2.7" fill="#f4f4f4"/>
<path d="M757.4,464.6 l2.6,1.7 l-2.6,1.7 z" fill="#f4f4f4"/>
<g fill="none" stroke="#f4f4f4" stroke-width="1.3" stroke-linejoin="round"><path d="M765.4,463.4 L772,457.7 H774.7 V472.2 H772 L765.4,466.6 z"/><path d="M772.2,460.5 V469.5" stroke-width="0.9"/><path d="M777.3,462.6 L781,459 M777.3,465.4 H782 M777.3,468.2 L781,471.9" stroke-width="0.9"/></g>
<circle cx="772.2" cy="465" r="0.9" fill="#f4f4f4"/></svg></body></html>
